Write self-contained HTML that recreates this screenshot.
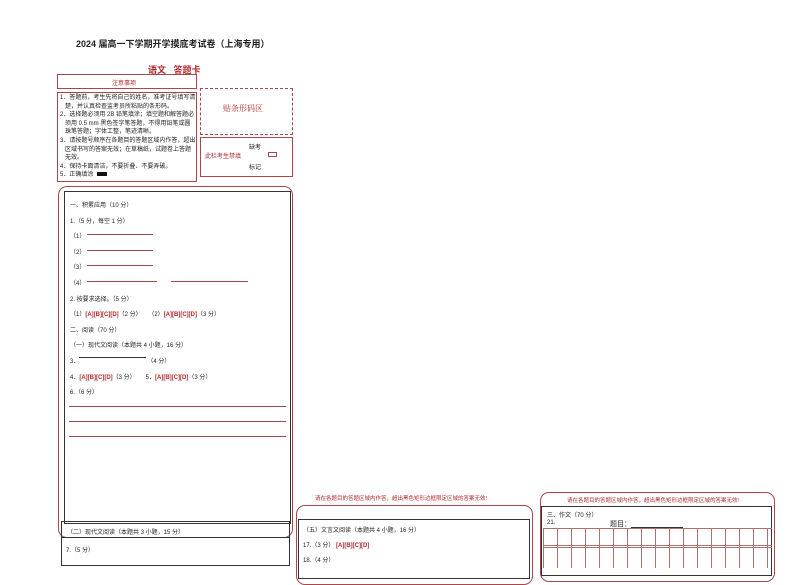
<!DOCTYPE html>
<html><head><meta charset="utf-8"><style>
*{margin:0;padding:0;box-sizing:border-box}
body{width:794px;height:562px;background:#fff;position:relative;overflow:hidden;font-family:"Liberation Sans","Noto Sans CJK SC",sans-serif;color:#222}
.a{position:absolute;white-space:nowrap}
.t{font-size:6px}
.r{color:#b0282b}
.b{border:1px solid #333}
.rr{border:1px solid #a8484a;border-radius:9px}
.ln{position:absolute;height:1px;background:#9a4a4a}
.ab{color:#b0282b;font-weight:bold}
</style></head><body>
<div class="a" style="left:76px;top:37px;font-size:9px;font-weight:bold">2024 届高一下学期开学摸底考试卷（上海专用）</div>
<div class="a r" style="left:148px;top:63px;font-size:9px;font-weight:bold">语文&nbsp;&nbsp;&nbsp;答题卡</div>
<div class="a b" style="left:57px;top:74px;width:140px;height:15px;border-color:#a8484a"></div>
<div class="a t r" style="left:112px;top:78px">注意事项</div>
<div class="a b" style="left:57px;top:92px;width:140px;height:90px;border-color:#a8484a"></div>
<div class="a t" style="left:60px;top:94px;line-height:8.6px">1．答题前，考生先将自己的姓名，准考证号填写清<br>&nbsp;&nbsp;&nbsp;楚，并认真检查监考员所粘贴的条形码。<br>2．选择题必须用 2B 铅笔填涂；填空题和解答题必<br>&nbsp;&nbsp;&nbsp;须用 0.5 mm 黑色签字笔答题，不得用铅笔或圆<br>&nbsp;&nbsp;&nbsp;珠笔答题；字体工整，笔迹清晰。<br>3．请按题号顺序在各题目的答题区域内作答，超出<br>&nbsp;&nbsp;&nbsp;区域书写的答案无效；在草稿纸，试题卷上答题<br>&nbsp;&nbsp;&nbsp;无效。<br>4．保持卡面清洁，不要折叠、不要弄破。<br>5．正确填涂&nbsp;&nbsp;<span style="display:inline-block;width:10px;height:4px;background:#111"></span></div>
<div class="a" style="left:200px;top:88px;width:93px;height:47px;border:1px dashed #a8484a"></div>
<div class="a r" style="left:223px;top:103px;font-size:8px;font-family:'Liberation Serif','Noto Serif CJK SC',serif">贴条形码区</div>
<div class="a" style="left:200px;top:137px;width:93px;height:40px;border:1px solid #a8484a"></div>
<div class="a t" style="left:249px;top:142px">缺考</div>
<div class="a t r" style="left:205px;top:151px">此栏考生禁填</div>
<div class="a" style="left:268px;top:152px;width:9px;height:5px;border:1px solid #a8484a"></div>
<div class="a t" style="left:249px;top:162px">标记</div>

<div class="a rr" style="left:58px;top:186px;width:235px;height:352px"></div>
<div class="a b" style="left:64px;top:191px;width:227px;height:333px"></div>
<div class="a t" style="left:70px;top:199px;line-height:15.6px">一、积累应用（10 分）<br>1.（5 分，每空 1 分）<br>（1）<br>（2）<br>（3）<br>（4）<br>2. 按要求选择。（5 分）<br>（1）<span class="ab">[A][B][C][D]</span>（2 分）&nbsp;&nbsp;&nbsp;&nbsp;（2）<span class="ab">[A][B][C][D]</span>（3 分）<br>二、阅读（70 分）<br>（一）现代文阅读（本题共 4 小题，16 分）<br>3．<span style="display:inline-block;width:68px"></span>（4 分）<br>4．<span class="ab">[A][B][C][D]</span>（3 分）&nbsp;&nbsp;&nbsp;&nbsp;&nbsp;&nbsp;5．<span class="ab">[A][B][C][D]</span>（3 分）<br>6.（6 分）</div>
<div class="ln" style="left:87px;top:234px;width:66px"></div>
<div class="ln" style="left:87px;top:250px;width:66px"></div>
<div class="ln" style="left:87px;top:265px;width:66px"></div>
<div class="ln" style="left:87px;top:281px;width:70px"></div>
<div class="ln" style="left:171px;top:281px;width:77px"></div>
<div class="ln" style="left:79px;top:357px;width:67px;background:#333"></div>
<div class="ln" style="left:69px;top:406px;width:217px"></div>
<div class="ln" style="left:69px;top:421px;width:217px"></div>
<div class="ln" style="left:69px;top:436px;width:217px"></div>
<div class="a b" style="left:61px;top:521px;width:229px;height:45px;background:transparent"></div>
<div class="ln" style="left:61px;top:537px;width:229px;background:#333"></div>
<div class="a t" style="left:67px;top:527px">（二）现代文阅读（本题共 3 小题，15 分）</div>
<div class="a t" style="left:66px;top:545px">7.（5 分）</div>

<div class="a t r" style="left:315px;top:494px;font-size:5.5px">请在各题目的答题区域内作答，超出黑色矩形边框限定区域的答案无效!</div>
<div class="a rr" style="left:296px;top:505px;width:237px;height:80px"></div>
<div class="a b" style="left:298px;top:519px;width:232px;height:60px"></div>
<div class="a t" style="left:303px;top:524px;line-height:15px">（五）文言文阅读（本题共 4 小题，16 分）<br>17.（3 分）&nbsp;<span class="ab">[A][B][C][D]</span><br>18.（4 分）</div>

<div class="a rr" style="left:540px;top:492px;width:235px;height:90px"></div>
<div class="a t r" style="left:567px;top:496px;font-size:5.5px">请在各题目的答题区域内作答，超出黑色矩形边框限定区域的答案无效!</div>
<div class="a b" style="left:541px;top:506px;width:231px;height:70px"></div>
<div class="a t" style="left:547px;top:510px">三、作文（70 分）</div>
<div class="a t" style="left:547px;top:520px">21.</div>
<div class="a t" style="left:610px;top:519px;font-size:7px">题目：</div>
<div class="ln" style="left:631px;top:527px;width:52px;background:#333"></div>
<div class="a" style="left:543px;top:528px;width:229px;height:40px;background-image:linear-gradient(90deg,#b07070 1px,transparent 1px);background-size:14px 100%;border-top:1px solid #b07070"></div>
<div class="ln" style="left:543px;top:545px;width:229px;background:#b07070"></div>
<div class="ln" style="left:543px;top:547px;width:229px;background:#b07070"></div>
</body></html>
